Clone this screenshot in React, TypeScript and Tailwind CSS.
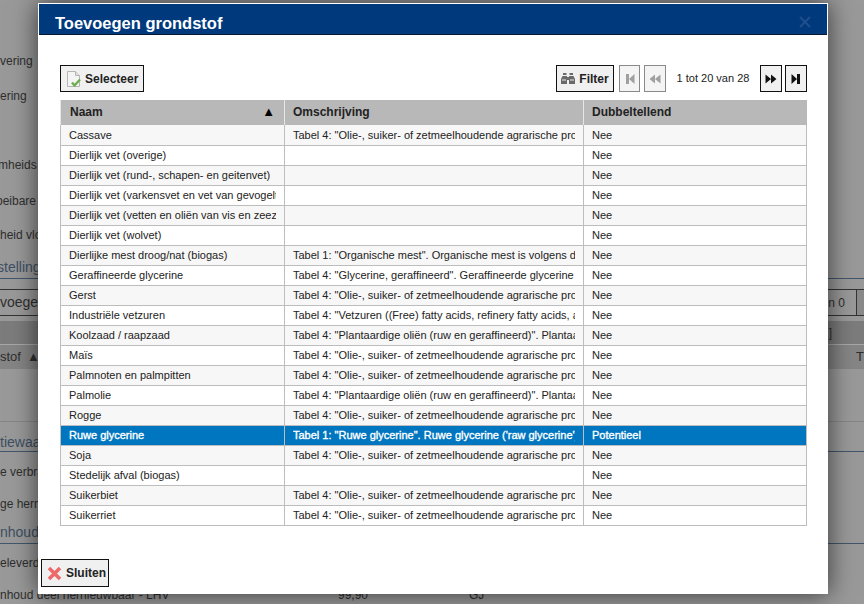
const t4 = 'Tabel 4: "Olie-, suiker- of zetmeelhoudende agrarische producten"';

const rows: [string, string, string][] = [
  ["Cassave", t4, "Nee"],
  ["Dierlijk vet (overige)", "", "Nee"],
  ["Dierlijk vet (rund-, schapen- en geitenvet)", "", "Nee"],
  ["Dierlijk vet (varkensvet en vet van gevogelte)", "", "Nee"],
  ["Dierlijk vet (vetten en oliën van vis en zeezoogdieren)", "", "Nee"],
  ["Dierlijk vet (wolvet)", "", "Nee"],
  ["Dierlijke mest droog/nat (biogas)", 'Tabel 1: "Organische mest". Organische mest is volgens de richtlijn', "Nee"],
  ["Geraffineerde glycerine", 'Tabel 4: "Glycerine, geraffineerd". Geraffineerde glycerine is een product', "Nee"],
  ["Gerst", t4, "Nee"],
  ["Industriële vetzuren", 'Tabel 4: "Vetzuren ((Free) fatty acids, refinery fatty acids, acid oils)"', "Nee"],
  ["Koolzaad / raapzaad", 'Tabel 4: "Plantaardige oliën (ruw en geraffineerd)". Plantaardige oliën', "Nee"],
  ["Maïs", t4, "Nee"],
  ["Palmnoten en palmpitten", t4, "Nee"],
  ["Palmolie", 'Tabel 4: "Plantaardige oliën (ruw en geraffineerd)". Plantaardige oliën', "Nee"],
  ["Rogge", t4, "Nee"],
  ["Ruwe glycerine", "Tabel 1: \"Ruwe glycerine\". Ruwe glycerine ('raw glycerine') is een bijproduct", "Potentieel"],
  ["Soja", t4, "Nee"],
  ["Stedelijk afval (biogas)", "", "Nee"],
  ["Suikerbiet", t4, "Nee"],
  ["Suikerriet", t4, "Nee"],
];

function SelectIcon() {
  return (
    <svg width="16" height="18" viewBox="0 0 16 18">
      <path d="M1.5 1.5h8l4 4v11h-12z" fill="#f4f4f4" stroke="#b5b5b5" />
      <path d="M9.5 1.5v4h4" fill="#e2e2e2" stroke="#b5b5b5" />
      <path d="M6 12.5l2.5 3 5.5-6" fill="none" stroke="#6fae4f" strokeWidth="2.4" />
    </svg>
  );
}

function BinocularsIcon() {
  return (
    <svg width="14" height="13" viewBox="0 0 14 13" fill="#6a6a6a">
      <path d="M2 1h3.5v2H2zM8.5 1H12v2H8.5z" />
      <path d="M1.5 4H6v8H0V7zM8 4h4.5L14 7v5H8z" />
      <path d="M6 5h2v3H6z" />
      <path d="M1 8h4M9 8h4" stroke="#e6e6e6" strokeWidth="1" />
    </svg>
  );
}

function PagerIcon({ type, color }: { type: "first" | "prev" | "next" | "last"; color: string }) {
  return (
    <svg width="12" height="12" viewBox="0 0 12 12" fill={color}>
      {type === "first" && <path d="M2 1h3v10H2zM10.5 1v10L5 6z" />}
      {type === "prev" && <path d="M6 1.5v9L.5 6zM11.5 1.5v9L6 6z" />}
      {type === "next" && <path d="M.5 1.5v9L6 6zM6 1.5v9L11.5 6z" />}
      {type === "last" && <path d="M1.5 1v10L7 6zM7 1h3v10H7z" />}
    </svg>
  );
}

function Background() {
  return (
    <div className="h-[604px] bg-[#999999] text-[#2e2e2e] text-[12px]">
      <div className="h-[87px] pt-[52px]">vering</div>
      <div className="h-[69px]">ering</div>
      <div className="h-[36px] ml-[-2px]">mheids</div>
      <div className="h-[34px] ml-[-4px]">peibare</div>
      <div className="h-[31px]">heid vlo</div>
      <div className="h-[22px] text-[14px] text-[#3d4f63] border-b border-[#42566b]">
        <span className="ml-[-3px]">stelling</span>
      </div>
      <div className="h-[27px] mt-[10px] flex items-center justify-between border-y border-[#333333] text-[14px]">
        <span>voeger</span>
        <span className="flex items-center gap-[11px] mr-[-2px] h-[27px] text-[12px]">
          n 0
          <span className="w-[10px] h-[27px] border border-[#333333] bg-[#8a8a8a]" />
        </span>
      </div>
      <div className="h-[23px] mt-[5px] bg-[#7c7c7c] flex justify-end items-center pr-[32px] text-[12px]">]</div>
      <div className="h-[25px] bg-[#858585] border-t border-[#a8a8a8] flex items-center justify-between text-[13px]">
        <span className="flex gap-[6px]">
          stof
          <span>▲</span>
        </span>
        <span>T</span>
      </div>
      <div className="h-[53px] border-b border-[#868686]" />
      <div className="h-[30px] pt-[10px] text-[14px] text-[#3d4f63] border-b border-[#42566b]">tiewaa</div>
      <div className="h-[43px] pt-[11px]">e verbra</div>
      <div className="h-[27px]">ge herm</div>
      <div className="h-[22px] text-[14px] text-[#3d4f63] border-b border-[#42566b]">nhoud</div>
      <div className="h-[42px] pt-[10px]">eleverde</div>
      <div className="flex">
        <span className="w-[338px]">nhoud deel hernieuwbaar - LHV</span>
        <span className="w-[131px]">99,90</span>
        <span>GJ</span>
      </div>
    </div>
  );
}

export default function App() {
  return (
    <div className="relative w-[864px] h-[604px] overflow-hidden font-['Liberation_Sans',Arial,sans-serif]">
      <Background />
      <div className="absolute left-[38px] top-[3px] w-[790px] h-[591px] bg-white border-t border-x border-white shadow-[0_0_24px_rgba(0,0,0,0.65)] flex flex-col">
        <div className="h-[31px] shrink-0 bg-[#003a7d] border-b border-[#0a1a30] flex items-center justify-between pl-[16px] pr-[16px]">
          <span className="text-[16.5px] font-bold text-white leading-none pt-[8px]">Toevoegen grondstof</span>
          <svg width="12" height="12" viewBox="0 0 12 12" className="mt-[6px]">
            <path d="M1 1l10 10M11 1L1 11" stroke="#1f4f8a" strokeWidth="2" />
          </svg>
        </div>

        <div className="pl-[21px] pr-[20px] pt-[30px]">
          <div className="flex items-center h-[27px] text-[12px] text-[#222222]">
            <button className="h-[27px] w-[84px] flex items-center gap-[3px] pl-[5px] bg-[#f0f0f0] border border-[#111111] font-bold">
              <SelectIcon />
              Selecteer
            </button>
            <div className="ml-auto flex items-center">
              <button className="h-[27px] w-[58px] flex items-center justify-center gap-[4px] bg-[#f0f0f0] border border-[#111111] font-bold">
                <BinocularsIcon />
                Filter
              </button>
              <button className="ml-[5px] h-[27px] w-[21px] flex items-center justify-center bg-[#f4f4f4] border border-[#8a8a8a]">
                <PagerIcon type="first" color="#a0a0a0" />
              </button>
              <button className="ml-[4px] h-[27px] w-[22px] flex items-center justify-center bg-[#f4f4f4] border border-[#8a8a8a]">
                <PagerIcon type="prev" color="#a0a0a0" />
              </button>
              <span className="w-[94px] text-center text-[11px]">1 tot 20 van 28</span>
              <button className="h-[27px] w-[22px] flex items-center justify-center bg-[#f0f0f0] border border-[#111111]">
                <PagerIcon type="next" color="#111111" />
              </button>
              <button className="ml-[3px] h-[27px] w-[22px] flex items-center justify-center bg-[#f0f0f0] border border-[#111111]">
                <PagerIcon type="last" color="#111111" />
              </button>
            </div>
          </div>

          <table className="mt-[8px] w-[746px] table-fixed border-collapse text-[11px] text-[#222222]">
            <colgroup>
              <col className="w-[224px]" />
              <col className="w-[299px]" />
              <col className="w-[223px]" />
            </colgroup>
            <thead>
              <tr className="h-[25px] bg-[#b8b8b8] text-[12px] text-[#222222] text-left">
                <th className="pl-[9px] pr-[9px] pb-[2px] font-bold border-x border-[#e6e6e6]">
                  <div className="flex items-center justify-between">
                    <span>Naam</span>
                    <span className="text-[13px] leading-none text-black">▲</span>
                  </div>
                </th>
                <th className="pl-[8px] pb-[2px] font-bold border-r border-[#e6e6e6]">Omschrijving</th>
                <th className="pl-[8px] pb-[2px] font-bold">Dubbeltellend</th>
              </tr>
            </thead>
            <tbody>
              {rows.map((r, i) => {
                const selected = r[0] === "Ruwe glycerine";
                const rowClass = selected
                  ? "bg-[#0076c0] text-white [-webkit-text-stroke:0.35px_white]"
                  : i % 2 === 0
                    ? "bg-[#f7f7f7]"
                    : "bg-white";
                return (
                  <tr key={r[0]} className={`h-[20px] border-b border-[#bdbdbd] ${rowClass}`}>
                    <td className="p-0 border-x border-[#bdbdbd]">
                      <div className="ml-[8px] mr-[8px] overflow-hidden whitespace-nowrap">{r[0]}</div>
                    </td>
                    <td className="p-0 border-r border-[#bdbdbd]">
                      <div className="ml-[8px] mr-[8px] overflow-hidden whitespace-nowrap">{r[1]}</div>
                    </td>
                    <td className="p-0 border-r border-[#bdbdbd]">
                      <div className="ml-[8px] overflow-hidden whitespace-nowrap">{r[2]}</div>
                    </td>
                  </tr>
                );
              })}
            </tbody>
          </table>
        </div>

        <div className="mt-auto pl-[2px] pb-[7px]">
          <button className="h-[28px] w-[68px] flex items-center gap-[4px] pl-[5px] bg-[#f0f0f0] border border-[#111111] text-[12px] font-bold text-[#222222]">
            <svg width="15" height="15" viewBox="0 0 15 15">
              <path d="M2 2l11 11M13 2L2 13" stroke="#ee6a6a" strokeWidth="3.6" />
            </svg>
            Sluiten
          </button>
        </div>
      </div>
    </div>
  );
}
